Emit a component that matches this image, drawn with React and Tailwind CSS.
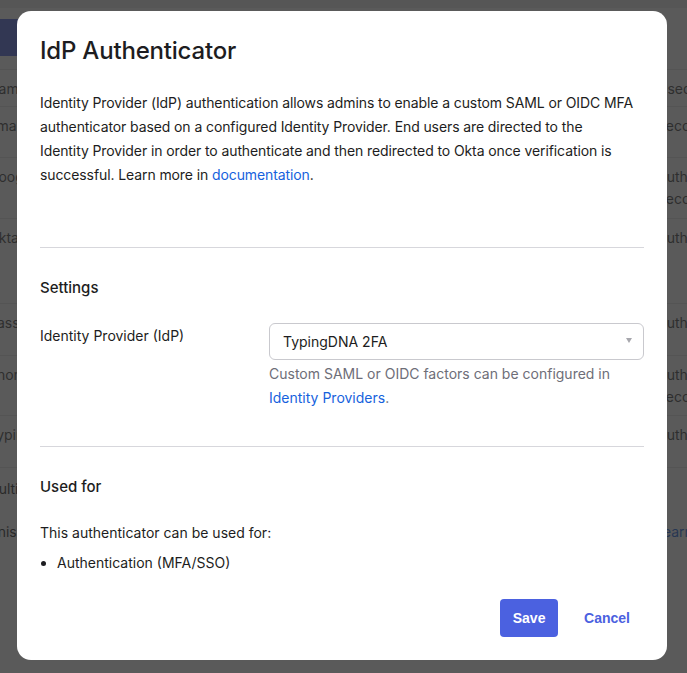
import React from 'react';

const rows = [
    { left: 'Name', right: 'Used for', h: 'h-[37px]' },
    { left: 'Email', right: 'Recovery', h: 'h-[51px]' },
    { left: 'Google', right: 'Authentication', right2: 'Recovery', h: 'h-[61px]' },
    { left: 'Okta', right: 'Authentication', h: 'h-[85px]' },
    { left: 'Password', right: 'Authentication', h: 'h-[52px]' },
    { left: 'Phone', right: 'Authentication', right2: 'Recovery', h: 'h-[60px]' },
    { left: 'TypingDNA', right: 'Authentication', h: 'h-[52px]' },
];

const BackgroundPage = () => {
    return (
        <div className="min-h-[673px] bg-white font-['Inter',sans-serif] text-[14px] text-[#1d1d21]">
            <div className="h-[8px] bg-[#ebebeb]" />
            <div className="flex h-[61px] items-start pt-[11px]">
                <div className="ml-[-30px] flex h-[37px] w-[110px] items-center justify-end rounded-[6px] bg-[#4b5fe0] pr-[10px] text-white">Add</div>
            </div>
            <div className="border-t border-[#e4e4e4]">
                {rows.map((row) => (
                    <div key={row.left} className={`flex justify-between border-b border-[#e4e4e4] ${row.h} pt-[8px]`}>
                        <div className="ml-[-12px] text-[#3a3a3a]">{row.left}</div>
                        <div className="flex w-[30px] flex-col whitespace-nowrap leading-[22px] text-[#3a3a3a]">
                            <span>{row.right}</span>
                            {row.right2 && <span>{row.right2}</span>}
                        </div>
                    </div>
                ))}
            </div>
            <div className="flex flex-col gap-[22px] pt-[10px]">
                <div className="ml-[-14px]">Multiple</div>
                <div className="flex justify-between">
                    <div className="ml-[-14px]">Finish</div>
                    <div className="w-[32px] whitespace-nowrap text-[#1662dd]">Learn</div>
                </div>
            </div>
        </div>
    );
};

const App = () => {
    return (
        <div className="relative h-[673px] w-[687px] overflow-hidden">
            <BackgroundPage />
            <div className="fixed inset-0 bg-[rgba(44,44,44,0.78)]" />

            <div className="fixed left-[17px] top-[11px] flex h-[649px] w-[650px] flex-col rounded-[14px] bg-white px-[23px] font-['Inter',sans-serif] text-[#1d1d21]">
                <h1 className="mt-[25px] text-[24px] font-medium leading-[30px] tracking-[-0.2px]">IdP Authenticator</h1>

                <p className="mt-[25px] text-[14px] leading-[24px] tracking-[-0.1px]">
                    Identity Provider (IdP) authentication allows admins to enable a custom SAML or OIDC MFA
                    <br />
                    authenticator based on a configured Identity Provider. End users are directed to the
                    <br />
                    Identity Provider in order to authenticate and then redirected to Okta once verification is
                    <br />
                    successful. Learn more in <a className="text-[#1662dd]">documentation</a>.
                </p>

                <div className="mt-[60px] border-t border-[#d7d7dc]" />

                <h2 className="mt-[30px] text-[15px] font-medium leading-[20px]">Settings</h2>

                <div className="mt-[25px] flex">
                    <label className="w-[229px] pt-[3px] text-[14px] leading-[20px]">Identity Provider (IdP)</label>
                    <div className="flex-1">
                        <div className="flex h-[37px] items-center justify-between rounded-[6px] border border-[#c9c9ce] pl-[13px] pr-[11px] text-[14px]">
                            <span>TypingDNA 2FA</span>
                            <svg width="6" height="5" viewBox="0 0 6 5" className="mt-[-2px]">
                                <path d="M0 0 L6 0 L3 5 Z" fill="#a7a7ad" />
                            </svg>
                        </div>
                        <p className="mt-[2px] text-[14px] leading-[24px] text-[#6e6e78]">
                            Custom SAML or OIDC factors can be configured in
                            <br />
                            <a className="text-[#1662dd]">Identity Providers</a>.
                        </p>
                    </div>
                </div>

                <div className="mt-[36px] border-t border-[#d7d7dc]" />

                <h2 className="mt-[30px] text-[15px] font-medium leading-[20px]">Used for</h2>

                <p className="mt-[26px] text-[14px] leading-[20px]">This authenticator can be used for:</p>
                <ul className="mt-[10px] list-disc pl-[17px] text-[14px] leading-[20px]">
                    <li>Authentication (MFA/SSO)</li>
                </ul>

                <div className="mt-[26px] flex items-center justify-end gap-[12px] font-['Liberation_Sans',sans-serif] text-[14px] font-bold">
                    <button className="h-[38px] w-[58px] rounded-[4px] bg-[#4b61e0] text-white">Save</button>
                    <button className="h-[38px] px-[14px] text-[#4b61e0]">Cancel</button>
                </div>
            </div>
        </div>
    );
};

export default App;
